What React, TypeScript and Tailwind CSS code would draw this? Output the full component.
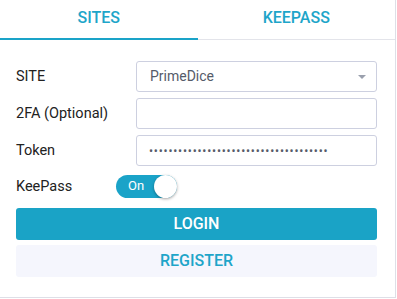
import { useState } from 'react'

export default function App() {
  const [tab, setTab] = useState('sites')
  const [keepass, setKeepass] = useState(true)

  return (
    <div className="h-[299px] w-[397px] bg-white font-['Roboto',sans-serif]">
      <div className="h-[298px] w-[396px] border-r border-b border-[#dedfe7]">
        <div className="flex h-10 border-b border-[#e3e4ea]">
          <button
            onClick={() => setTab('sites')}
            className={`-mb-px flex-1 border-b-2 pb-[3px] text-[16px] font-medium text-[#1ea5c9] ${tab === 'sites' ? 'border-[#1aa3c8]' : 'border-transparent'}`}
          >
            SITES
          </button>
          <button
            onClick={() => setTab('keepass')}
            className={`-mb-px flex-1 border-b-2 pb-[3px] text-[16px] font-medium text-[#1ea5c9] ${tab === 'keepass' ? 'border-[#1aa3c8]' : 'border-transparent'}`}
          >
            KEEPASS
          </button>
        </div>

        <div className="pl-4 pr-[18px] pt-[21px]">
          <div className="flex flex-col gap-[6px]">
            <div className="flex items-center">
              <label className="w-[120px] text-[14.5px] text-[#222]">SITE</label>
              <div className="relative flex h-[31px] flex-1 items-center rounded-[3px] border border-[#cdd0e0] pl-[13px] text-[14px] text-[#555b69]">
                PrimeDice
                <span className="absolute right-[10px] top-[13px] h-0 w-0 border-x-[4px] border-t-[4px] border-x-transparent border-t-[#9aa0ad]" />
              </div>
            </div>
            <div className="flex items-center">
              <label className="w-[120px] text-[14.5px] text-[#222]">2FA (Optional)</label>
              <input className="h-[31px] flex-1 rounded-[3px] border border-[#cdd0e0] px-3 text-[14px] outline-none" />
            </div>
            <div className="flex items-center">
              <label className="w-[120px] text-[14.5px] text-[#222]">Token</label>
              <input
                type="password"
                readOnly
                value="abcdefghijabcdefghijabcdefghijabcdefg"
                className="h-[31px] flex-1 rounded-[3px] border border-[#cdd0e0] px-3 text-[12px] tracking-[0.8px] text-[#555b69] outline-none"
              />
            </div>
          </div>

          <div className="mt-[9px] flex items-center">
            <span className="w-[100px] text-[14.5px] text-[#222]">KeePass</span>
            <button
              onClick={() => setKeepass(!keepass)}
              className={`relative h-[23px] w-[61px] rounded-full ${keepass ? 'bg-[#1aa3c8]' : 'bg-[#c8cad4]'}`}
            >
              <span className={`absolute top-[3px] text-[13px] leading-[16px] text-white ${keepass ? 'left-[12px]' : 'right-[10px]'}`}>
                {keepass ? 'On' : 'Off'}
              </span>
              <span
                className={`absolute top-0 h-[23px] w-[23px] rounded-full bg-white shadow-[0_1px_3px_rgba(0,0,0,0.35)] ${keepass ? 'right-0' : 'left-0'}`}
              />
            </button>
          </div>

          <button className="mt-[10px] h-[32px] w-full rounded-[3px] bg-[#1aa3c6] text-[16px] font-medium text-white">
            LOGIN
          </button>
          <button className="mt-[5px] h-[32px] w-full rounded-[3px] bg-[#f5f6fd] text-[16px] font-medium text-[#1ea5c9]">
            REGISTER
          </button>
        </div>
      </div>
    </div>
  )
}
